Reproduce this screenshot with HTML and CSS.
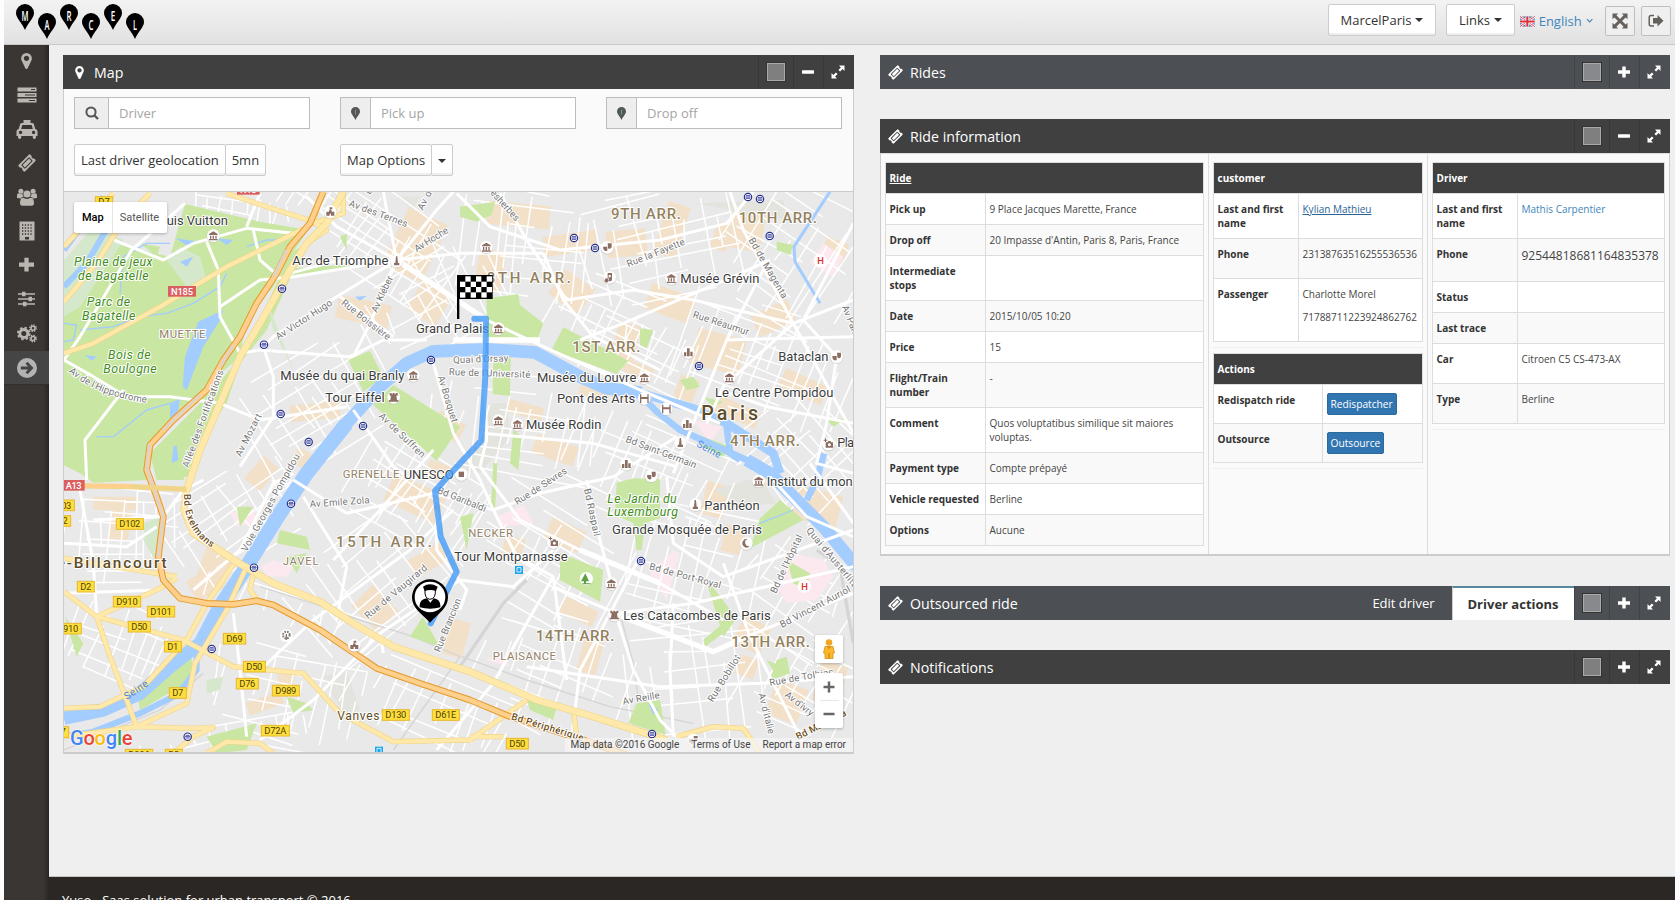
FILE: index.html
```html
<!DOCTYPE html>
<html lang="en">
<head>
<meta charset="utf-8">
<title>Marcel</title>
<link rel="stylesheet" href="styles.css">
</head>
<body>
<svg class="defs" width="0" height="0">
  <symbol id="i-marker" viewBox="0 128 1024 1536"><path d="M768 640q0-106-75-181t-181-75-181 75-75 181 75 181 181 75 181-75 75-181zm256 0q0 109-33 179l-364 774q-16 33-47.500 52t-67.500 19-67.500-19-46.500-52l-365-774q-33-70-33-179 0-212 150-362t362-150 362 150 150 362z"/></symbol>
  <symbol id="i-ticket" viewBox="0 0 18 18"><path fill-rule="evenodd" d="M10.800.8a1.200 1.200 0 0 1 1.700 0l1.200 1.200a2 2 0 0 0 2.500 2.500l1 1a1.200 1.200 0 0 1 0 1.700L7.200 17.200a1.200 1.200 0 0 1-1.700 0l-1.200-1.200a2 2 0 0 0-2.500-2.500l-1-1a1.200 1.200 0 0 1 0-1.700zM10.600 3.600 3.600 10.600a.8.8 0 0 0 0 1l2.800 2.800a.8.8 0 0 0 1 0L14.400 7.400a.8.8 0 0 0 0-1L11.600 3.600a.8.8 0 0 0-1 0zM11.100 4.600 13.400 6.900 6.900 13.400 4.600 11.100z"/></symbol>
  <symbol id="i-full" viewBox="0 0 14 14"><path d="M8 .5h5.500V6l-1.900-1.900-2.500 2.500-1.700-1.700 2.500-2.500zM6 13.500H.500V8l1.900 1.900 2.500-2.500 1.700 1.700-2.500 2.500z"/></symbol>
  <symbol id="i-plus" viewBox="0 0 12 12"><path d="M4.300.5h3.400v3.800H12v3.400H7.700v3.800H4.300V7.700H0V4.300h4.300z"/></symbol>
  <symbol id="i-minus" viewBox="0 0 12 12"><rect y="4.300" width="12" height="3.400" rx=".6"/></symbol>
  <symbol id="i-drop" viewBox="0 0 18 26"><path d="M9 0a9 9 0 0 1 9 9c0 5-6 10-9 17C6 19 0 14 0 9a9 9 0 0 1 9-9z"/></symbol>
</svg>
<div class="page">
  <header class="topbar">
    <svg class="logo" width="130" height="37" viewBox="0 0 130 37">
      <g><use href="#i-drop" x="1" y="0" width="18" height="26"/><use href="#i-drop" x="23" y="9" width="18" height="26"/><use href="#i-drop" x="45" y="0" width="18" height="26"/><use href="#i-drop" x="67" y="9" width="18" height="26"/><use href="#i-drop" x="89" y="0" width="18" height="26"/><use href="#i-drop" x="111" y="9" width="18" height="26"/></g>
      <g class="logo-letters"><text x="6.500" y="16.500" textLength="7" lengthAdjust="spacingAndGlyphs">M</text><text x="29.500" y="25.500" textLength="5" lengthAdjust="spacingAndGlyphs">A</text><text x="51.500" y="16.500" textLength="5" lengthAdjust="spacingAndGlyphs">R</text><text x="73.500" y="25.500" textLength="5" lengthAdjust="spacingAndGlyphs">C</text><text x="95.800" y="16.500" textLength="4.500" lengthAdjust="spacingAndGlyphs">E</text><text x="118" y="25.500" textLength="4" lengthAdjust="spacingAndGlyphs">L</text></g>
    </svg>
    <nav class="tools">
      <button class="drop wide">MarcelParis<i class="caret"></i></button>
      <button class="drop links">Links<i class="caret"></i></button>
      <a class="lang"><svg width="16" height="11" viewBox="0 0 16 11"><rect width="16" height="11" fill="#5f6fa8"/><path d="M0 0 16 11M16 0 0 11" stroke="#fff" stroke-width="2.600"/><path d="M0 0 16 11M16 0 0 11" stroke="#d4343f" stroke-width="1"/><path d="M8 0v11M0 5.500h16" stroke="#fff" stroke-width="4"/><path d="M8 0v11M0 5.500h16" stroke="#dc2f3b" stroke-width="2.200"/></svg><span>English</span><svg width="8" height="6" viewBox="0 0 8 6"><path d="M1 1l3 3 3-3" fill="none" stroke="#3f86bd" stroke-width="1.200"/></svg></a>
      <button class="square"><svg width="16" height="16" viewBox="0 0 16 16"><path d="M.5.500h5.700L4.400 2.300 8 6l3.600-3.700L9.800.500h5.700v5.700l-1.800-1.800L10 8l3.700 3.600 1.800-1.800v5.700H9.800l1.800-1.800L8 10l-3.600 3.700 1.800 1.800H.500V9.800l1.800 1.800L6 8 2.300 4.400.500 6.200z"/></svg></button>
      <button class="square"><svg width="16" height="14" viewBox="0 0 16 14"><path d="M6 1.500H3.200Q1.200 1.500 1.200 3.500v6.500q0 2 2 2H6" fill="none" stroke="#66605c" stroke-width="1.500"/><path d="M9.500 1 15.500 6.800 9.500 12.600V9.600H5V4h4.500z"/></svg></button>
    </nav>
  </header>
  <div class="middle">
    <aside class="side">
      <a><svg width="11" height="16"><use href="#i-marker"/></svg></a>
      <a><svg width="20" height="16" viewBox="0 0 20 16"><path fill-rule="evenodd" d="M.5.500h19v4H.500zM14 2v1h4V2zM.5 6h19v4H.500zM8 7.500v1h10v-1zM.5 11.500h19v4H.500zM12 13v1h6v-1z"/></svg></a>
      <a><svg width="22" height="19" viewBox="0 0 22 19"><path fill-rule="evenodd" d="M7.500 0h7v3h1.800q1.200 0 1.600 1.200L19.300 9q2.200.2 2.200 2.500V16H20v1.300a1.600 1.600 0 0 1-3.300 0V16H5.300v1.300a1.600 1.600 0 0 1-3.300 0V16H.500v-4.500Q.500 9.200 2.700 9L4.100 4.200Q4.500 3 5.700 3h1.800zM6.300 5 5.200 9h11.600l-1.100-4zM4.500 10.700a1.700 1.700 0 1 0 .1 0zM17.500 10.700a1.700 1.700 0 1 0 .1 0z"/></svg></a>
      <a><svg width="18" height="18"><use href="#i-ticket"/></svg></a>
      <a><svg width="20" height="18" viewBox="0 0 20 18"><circle cx="3.900" cy="3.200" r="2.500"/><circle cx="16.100" cy="3.200" r="2.500"/><path d="M0 10V7.500q0-2.200 1.800-2.200l2 .8 1.600-.3q.2 1.800 1.300 2.900Q4 9 4 10.500zM20 10V7.500q0-2.200-1.800-2.200l-2 .8-1.600-.3q-.2 1.800-1.300 2.900Q16 9 16 10.500z"/><circle cx="10" cy="6" r="3.600"/><path d="M3 15.500Q3 9.800 6 9.800q4 2.200 8 0 3 0 3 5.700 0 2.300-2.500 2.300h-9Q3 17.800 3 15.500z"/></svg></a>
      <a><svg width="16" height="20" viewBox="0 0 16 20"><path d="M.5.500h15v19H.500z"/><path d="M3 4h10M3 7h10M3 10h10M3 13h10" stroke="#3a3633" stroke-width="1.300" stroke-dasharray="1.300 1.500"/><path d="M6 16h4v2.500H6z" fill="#3a3633"/></svg></a>
      <a class="up"><svg width="15" height="15"><use href="#i-plus"/></svg></a>
      <a><svg width="17" height="16" viewBox="0 0 17 16"><path d="M0 2.300h17v1.400H0zM0 7.300h17v1.400H0zM0 12.300h17v1.400H0zM4 .800h3.500v4.400H4zM10.500 5.800H14v4.400h-3.500zM5 10.800h3.500v4.400H5z"/></svg></a>
      <a><svg width="20" height="19" viewBox="0 0 20 19"><g fill="none" stroke="#bcb6b1"><circle cx="6.800" cy="9.500" r="4" stroke-width="2.800"/><circle cx="6.800" cy="9.500" r="5.900" stroke-width="1.800" stroke-dasharray="2.400 2.230"/><circle cx="16" cy="4.200" r="2" stroke-width="1.500"/><circle cx="16" cy="4.200" r="3.200" stroke-width="1.400" stroke-dasharray="1.400 1.110"/><circle cx="16" cy="14.600" r="2" stroke-width="1.500"/><circle cx="16" cy="14.600" r="3.200" stroke-width="1.400" stroke-dasharray="1.400 1.110"/></g></svg></a>
      <a class="on"><svg width="20" height="20" viewBox="0 0 20 20"><circle cx="10" cy="10" r="10"/><path d="M3.800 10h10M9.500 4.800l5 5.200-5 5.200" fill="none" stroke="#454545" stroke-width="2.900"/></svg></a>
    </aside>
    <div class="main">
      <div class="cols">
        <section class="panel">
          <div class="bar"><svg class="mk" width="9" height="13"><use href="#i-marker"/></svg><h2>Map</h2><i class="sq"></i><b><svg width="12" height="12"><use href="#i-minus"/></svg></b><b><svg width="14" height="14"><use href="#i-full"/></svg></b></div>
          <div class="body">
            <div class="filters">
              <label class="field first"><i><svg width="14" height="14" viewBox="0 0 14 14"><path d="M9.500 9.500 13 13" stroke="#555" stroke-width="2.400"/><circle cx="6" cy="6" r="4.600" fill="none" stroke="#555" stroke-width="2"/></svg></i><span>Driver</span></label>
              <label class="field"><i><svg width="9" height="13"><use href="#i-drop"/><path d="M4.500 2.500v5" stroke="#998877"/></svg></i><span>Pick up</span></label>
              <label class="field"><i><svg width="9" height="13"><use href="#i-drop"/><path d="M4.500 2.500v5" stroke="#6aa79a"/></svg></i><span>Drop off</span></label>
              <div class="btns"><button>Last driver geolocation</button><button>5mn</button></div>
              <div class="btns"><button>Map Options</button><button class="c"><i class="caret"></i></button></div>
            </div>
            <div class="map">
              <svg id="map" width="789" height="560" viewBox="12 6 2367 1680"></svg>
              <div class="maptype"><b>Map</b><span>Satellite</span></div>
              <div class="peg"><svg width="14" height="20" viewBox="0 0 14 20"><circle cx="7" cy="3.500" r="3.300" fill="#f0a824"/><path d="M3 7.500h8l1.500 6.500H11v5.500H3V14H1.500z" fill="#fbb829" stroke="#d48f17" stroke-width=".8"/><path d="M7 14v5M5.500 7.500 7 9.500l1.500-2" stroke="#c67b12" fill="none"/></svg></div>
              <div class="zoom"><svg width="12" height="12" viewBox="0 0 12 12"><path d="M6 .5v11M.5 6h11" stroke="#666" stroke-width="2.500"/></svg><svg width="12" height="12" viewBox="0 0 12 12"><path d="M.5 6h11" stroke="#666" stroke-width="2.500"/></svg></div>
              <div class="google"><span class="gb">G</span><span class="gr">o</span><span class="gy">o</span><span class="gb">g</span><span class="gg">l</span><span class="gr">e</span></div>
              <div class="credits"><span>Map data ©2016 Google</span><span>Terms of Use</span><span>Report a map error</span></div>
            </div>
          </div>
        </section>
        <div class="right">
          <section class="panel"><div class="bar blue"><svg width="15" height="15"><use href="#i-ticket"/></svg><h2>Rides</h2><i class="sq"></i><b><svg width="12" height="12"><use href="#i-plus"/></svg></b><b><svg width="14" height="14"><use href="#i-full"/></svg></b></div></section>
          <section class="panel"><div class="bar"><svg width="15" height="15"><use href="#i-ticket"/></svg><h2>Ride information</h2><i class="sq"></i><b><svg width="12" height="12"><use href="#i-minus"/></svg></b><b><svg width="14" height="14"><use href="#i-full"/></svg></b></div>
            <div class="body info">
              <div class="col ride">
                <table class="t-ride"><tr><th colspan="2"><u>Ride</u></th></tr>
                <tr><td>Pick up</td><td>9 Place Jacques Marette, France</td></tr>
                <tr><td>Drop off</td><td>20 Impasse d'Antin, Paris 8, Paris, France</td></tr>
                <tr><td>Intermediate<br>stops</td><td></td></tr>
                <tr><td>Date</td><td>2015/10/05 10:20</td></tr>
                <tr><td>Price</td><td>15</td></tr>
                <tr><td>Flight/Train<br>number</td><td>-</td></tr>
                <tr><td>Comment</td><td>Quos voluptatibus similique sit maiores<br>voluptas.</td></tr>
                <tr><td>Payment type</td><td>Compte prépayé</td></tr>
                <tr><td>Vehicle requested</td><td>Berline</td></tr>
                <tr><td>Options</td><td>Aucune</td></tr></table>
              </div>
              <div class="col cust">
                <table class="t-cust"><tr><th colspan="2">customer</th></tr>
                <tr><td>Last and first<br>name</td><td><a class="u">Kylian Mathieu</a></td></tr>
                <tr class="h40"><td>Phone</td><td>23138763516255536536</td></tr>
                <tr class="h63"><td>Passenger</td><td>Charlotte Morel<p>71788711223924862762</p></td></tr></table>
                <hr>
                <table class="t-act"><tr><th colspan="2">Actions</th></tr>
                <tr class="h39"><td>Redispatch ride</td><td><button>Redispatcher</button></td></tr>
                <tr class="h39"><td>Outsource</td><td><button>Outsource</button></td></tr></table>
                <hr>
              </div>
              <div class="col drv">
                <table class="t-drv"><tr><th colspan="2">Driver</th></tr>
                <tr><td>Last and first<br>name</td><td><a>Mathis Carpentier</a></td></tr>
                <tr class="h43"><td>Phone</td><td class="big">92544818681164835378</td></tr>
                <tr><td>Status</td><td></td></tr>
                <tr><td>Last trace</td><td></td></tr>
                <tr class="h40"><td>Car</td><td>Citroen C5 CS-473-AX</td></tr>
                <tr class="h40"><td>Type</td><td>Berline</td></tr></table>
                <hr>
              </div>
            </div>
          </section>
          <section class="panel"><div class="bar blue"><svg width="15" height="15"><use href="#i-ticket"/></svg><h2>Outsourced ride</h2><span class="tab">Edit driver</span><span class="tab act">Driver actions</span><i class="sq"></i><b><svg width="12" height="12"><use href="#i-plus"/></svg></b><b><svg width="14" height="14"><use href="#i-full"/></svg></b></div></section>
          <section class="panel"><div class="bar"><svg width="15" height="15"><use href="#i-ticket"/></svg><h2>Notifications</h2><i class="sq"></i><b><svg width="12" height="12"><use href="#i-plus"/></svg></b><b><svg width="14" height="14"><use href="#i-full"/></svg></b></div></section>
        </div>
      </div>
      <footer>Yuso - Saas solution for urban transport © 2016</footer>
    </div>
  </div>
</div>
<script src="map.js"></script>
</body>
</html>
```
FILE: map.js
```js
// City map: three units of the viewBox make one pixel.
const out = [];
const add = s => out.push(s);
let seed = 11;
const rnd = () => (seed = (seed * 16807) % 2147483647) / 2147483647;
const line = (cls, w, list) => list.forEach(p => add(`<polyline class="${cls}" stroke-width="${w}" points="${p}"/>`));
const area = (fill, list) => list.forEach(p => add(`<polygon fill="${fill}" points="${p}"/>`));

add('<rect x="12" y="6" width="2367" height="1680" fill="#e9e9e9"/>');

// Commercial blocks: x, y, width, height, angle
[[1000,70,130,190,25],[830,330,160,70,12],[1060,280,100,110,30],[1280,40,190,70,5],[1450,130,160,60,-8],[1250,180,80,120,10],[1480,260,110,90,35],
[1640,120,120,80,-5],[1800,40,70,160,18],[1760,300,140,80,20],[1900,430,150,110,15],[1660,400,70,130,15],[2010,60,100,120,10],[2080,350,120,70,-25],
[2160,560,140,60,25],[1960,640,140,50,25],[1560,580,90,50,22],[1340,640,110,40,15],[1420,750,130,60,18],[1120,680,90,60,30],[690,640,150,50,-5],[560,820,90,60,-50],
[700,780,50,50,30],[980,880,170,90,25],[1100,820,80,50,20],[420,1080,90,110,20],[390,1150,80,70,-30],[900,1200,90,110,-45],[1050,1080,110,60,-30],
[1160,1290,60,110,15],[1460,1000,110,70,25],[1500,1240,110,50,25],[1930,880,70,100,15],[1990,1010,60,80,15],[2200,900,140,100,15],[2030,1290,90,90,25],
[2130,1480,100,110,20],[2030,1400,60,60,20],[560,1520,110,40,-20],[650,1440,50,80,10],[100,920,130,40,0],[150,960,60,90,10],[1560,1350,60,100,15],[2290,150,70,60,20],
[1690,520,90,40,22],[1850,560,60,70,20],[2270,1420,80,120,15],[1330,1040,60,60,15],[1960,100,50,80,18]]
.forEach(([x,y,w,h,a]) => add(`<rect x="${x}" y="${y}" width="${w}" height="${h}" fill="#f2e0c8" transform="rotate(${a} ${x + w / 2} ${y + h / 2})"/>`));
area('#e2e4dd', ['1010,20 1080,20 1060,60','1180,830 1260,740 1270,640 1340,640 1350,740 1260,850','790,1460 860,1440 900,1560 850,1580','1900,40 2170,30 2180,90','1960,900 2100,860 2150,940 2050,950']);
area('#fbe9ef', ['2250,220 2290,160 2350,200 2320,260','1900,690 1985,710 1950,760','1310,980 1390,945 1420,1000 1330,1010','1770,1150 1840,1080 1860,1090 1820,1230','510,970 580,950 590,1000 530,1010','605,1130 640,1110 700,1130 680,1160 620,1160','1280,1410 1330,1390 1350,1430']);

// Minor streets: x, y, width, height, angle, spacing
[[640,0,620,300,33,42],[900,180,440,330,-28,46],[1200,0,420,330,8,48],[1560,0,480,330,-12,44],[1980,0,420,420,32,52],[1460,300,460,280,24,36],[1850,360,540,330,20,40],
[560,480,440,360,-32,50],[1100,560,540,330,10,46],[1500,700,560,340,24,44],[2040,650,350,330,48,46],[860,790,430,280,32,40],[320,840,430,300,-34,48],
[12,890,340,320,4,44],[700,1010,500,340,-38,52],[1220,960,520,330,30,54],[1700,960,400,380,14,52],[2050,1050,340,330,32,58],[20,1240,330,260,22,48],
[450,1380,460,300,12,50],[860,1460,520,220,24,56],[1250,1280,480,380,20,56],[1700,1300,420,370,-6,62],[2050,1350,340,330,28,46],[240,1600,500,90,-12,50],[400,10,300,110,8,34],[420,1220,560,120,18,90]]
.forEach(([x,y,w,h,a,g]) => {
  let d = '';
  for (let i = 0; i < w; i += g * (0.5 + rnd())) { const s = rnd() * h * 0.4, e = h * (0.5 + rnd() * 0.5); d += `M${(x + i).toFixed()} ${(y + s).toFixed()}L${(x + i + rnd() * 30 - 15).toFixed()} ${(y + e).toFixed()}`; }
  for (let j = 0; j < h; j += g * (0.5 + rnd())) { const s = rnd() * w * 0.4, e = w * (0.5 + rnd() * 0.5); d += `M${(x + s).toFixed()} ${(y + j).toFixed()}L${(x + e).toFixed()} ${(y + j + rnd() * 30 - 15).toFixed()}`; }
  add(`<path d="${d}" fill="none" stroke="#fff" stroke-width="4.500" transform="rotate(${a} ${x + w / 2} ${y + h / 2})"/>`);
});
area('#fbe9ef', ['2150,1190 2200,1090 2290,1110 2320,1160 2270,1230 2180,1240']);

// Railways
line('rail', 10, ['2380,1360 2340,1130 2270,1080','1200,1430 1330,1240 1400,1170']);
line('rail', 4, ['12,1680 300,1560 430,1450','1200,1400 1060,1340 900,1290 760,1240 600,1190','1205,1400 1400,1470 1650,1550 1900,1600','1000,1680 1200,1400','1680,1270 1720,1420 1740,1560']);

// Parks
area('#c9e6a2', ['12,210 180,165 330,200 375,42 600,95 745,120 690,200 640,290 560,380 540,500 470,560 440,620 340,690 270,770 262,870 100,878 60,850 12,826',
 '690,190 740,160 720,200 620,420 540,520 500,640 400,780 370,870 290,870 270,790 440,620 560,480','1280,325 1375,312 1380,345 1450,400 1430,455 1280,440',
 '1510,412 1705,512 1670,552 1475,480','1000,585 1200,710 1130,812 940,645','1300,500 1352,500 1350,618 1298,612','865,510 930,482 970,560 910,605','1200,50 1305,35 1295,75 1250,95 1200,80',
 '1670,878 1720,865 1800,868 1800,985 1755,1000 1745,1080 1730,1080 1720,1000 1665,975','2160,930 2230,990 2070,1075 2100,985','1730,1540 1800,1530 1817,1635 1705,1600','1088,1280 1140,1370 1050,1340',
 '390,1380 400,1440 360,1490 240,1560 235,1530 310,1450','660,1020 740,1040 750,1080 650,1060','680,1100 740,1090 710,1150','1935,1160 2030,1285 1990,1340','2120,1410 2190,1440 2150,1460','1740,415 1780,420 1760,475 1740,465',
 '1360,720 1385,740 1375,840 1350,820','2150,155 2200,165 2190,195 2150,180','700,235 1010,215 700,262','2300,690 2360,685 2320,710','1500,1090 1630,1140 1620,1235 1500,1170','1930,740 2010,770 1990,800 1930,770','440,1640 590,1600 560,1680 470,1690',
 '1300,820 1312,820 1305,960 1292,960','1930,1350 2000,1290 1990,1330 1935,1370','2180,1110 2250,1150 2240,1200 2200,1180','840,140 860,130 860,180','290,200 240,160 300,170','1930,620 1990,635 1960,650','530,950 580,950 540,1010','330,860 380,780 420,700 400,860',
 '680,1520 740,1540 760,1560 700,1570','1400,1530 1490,1550 1480,1590 1410,1560','1240,970 1200,980 1220,1080','15,1280 70,1360 50,1400','2150,1410 2180,1400 2190,1450 2130,1470','1860,570 1900,560 1920,590 1880,600']);
area('#d6e8cb', ['12,210 100,110 190,150 160,200 60,350 12,380','320,210 360,170 420,200 440,270 380,290','250,1000 300,980 290,1120 250,1050','440,1470 490,1460 480,1500 440,1510','700,540 620,330 640,420']);

// Water
line('water', 38, ['2390,1130 2290,1010 2130,850 2060,810','1745,608 1640,595 1560,560 1425,487 1280,478 1120,484 1040,520 960,590 860,700 740,850']);
line('water', 44, ['860,700 740,850 650,985 560,1130 470,1265']);
line('water', 40, ['475,1255 420,1360 330,1430 240,1510 130,1560 12,1585']);
line('water', 26, ['1735,608 1900,655 2000,700 2140,790 2160,850']);
line('water', 20, ['1740,612 1790,665 1860,720 1960,765 2060,810 2130,850','2000,710 2010,790 2040,810','2292,790 2270,870 2240,930']);
line('water', 18, ['410,1370 410,1440 350,1515 240,1570 100,1625 12,1640','12,180 130,20','12,290 80,220 150,100']);
line('water', 9, ['2310,5 2202,170 2205,215 2280,340']);
area('#a3ccff', ['345,145 420,155 380,165','360,215 400,200 380,230','400,1035 450,1020','415,395 490,360 480,390 430,470 380,600 368,590 375,500','75,495 110,500 95,512','330,640 360,625 350,690 330,700','340,770 350,765 355,810 335,820','885,320 920,318 900,332','1765,1540 1795,1560 1780,1575','470,145 520,150 500,165']);
line('brook', 4, ['12,400 50,405 40,450 12,455','60,420 160,410 240,380 320,370 400,340 480,290 500,250','110,740 160,740 260,660 330,640','180,310 190,200 260,160 330,160','560,170 620,150 660,150','2100,1000 2200,960']);

// Main white roads
line('white', 9, ['12,510 60,440 215,180 375,40','150,145 310,210 400,160 560,115 700,130','440,155 475,240 480,380 540,490 600,480 870,500 970,450 1100,450','580,120 600,210 640,245','600,10 560,110','12,510 100,560 200,620 330,620 480,640 600,690 860,650',
 '190,600 75,750 80,870','480,350 600,270 700,260 1010,210','1010,210 830,110 740,20','1010,210 1130,60 1180,5','1010,210 1280,390 1450,470 1740,600 1980,700','1010,210 980,60 970,5','1010,210 1200,190 1450,190','1010,210 930,400 880,500','1010,210 830,320 640,440 610,470','840,320 1000,440','1010,210 820,215 690,250',
 '1190,10 1290,110 1500,180 1800,150 2000,100 2080,5','1450,190 1510,330 1600,440 1800,540','1320,10 1400,150 1520,330 1720,300 1900,330 2200,400 2380,330','2200,400 2050,120 2010,5','2200,400 2330,640 2380,730','2200,400 1990,590 1940,700','2120,220 2000,450 1900,700 1840,850','2000,450 2380,440','1560,450 1690,400 2020,260 2130,210','2380,100 2230,390 2330,500 2300,700','1980,600 2120,650 2380,700',
 '610,470 640,560 640,680 540,830','1120,520 1180,730 1260,870 1300,960 1370,1100 1480,1160 1520,1470','880,660 1000,830 1040,860','700,870 860,970 1120,910 1300,960','1300,960 1440,910 1660,860 1850,740','1260,830 1380,990 1560,1080 1800,1180 1990,1290','1580,870 1620,1050 1660,1200','1820,860 1840,1060 1990,1160 2380,1020',
 '1740,1100 1650,1270 1560,1440 1530,1680','1660,1270 1960,1385 2060,1340 2380,1210','1990,1120 2070,1340 2230,1660','1670,1280 1720,1440 1800,1590 1850,1640','1480,1190 1670,1270 1900,1240 2380,1130','1200,1170 1360,1190 1480,1080','1480,1160 1400,1300 1300,1480 1130,1680','970,1390 960,1330 1200,1170','520,1270 540,1440 560,1640','600,1440 760,1290 1050,1080 1180,960',
 '12,1060 200,1070 290,1010','12,1210 300,1200','60,900 100,1120 110,1280','100,990 300,980','2250,820 2380,1000','2300,700 2270,820 2380,850','1270,730 1600,760 1850,830','1270,380 1280,750 1260,830','2130,860 2240,980 2380,1040','1400,1430 1800,1490 2100,1480 2380,1460','600,1650 760,1530 960,1330','1130,960 1130,1080 1220,1200 1200,1260','820,1110 960,960 1120,780','730,920 860,1130 830,1290','400,1200 540,1080 640,880 700,850','430,870 370,900 310,980','1840,1240 1830,1440 1840,1640']);
line('white', 16, ['1010,210 1280,390','1660,1270 1960,1385 2060,1340','1560,1080 1800,1180','1180,450 1440,450']);

// Yellow roads
const yellow = ['850,5 800,100 740,160 690,240 640,330 600,400 540,500 480,640 420,780 380,900 372,960 400,1030 530,1115 640,1180 780,1235 880,1300 1000,1370 1230,1445 1430,1530 1600,1580 1820,1650',
 '12,490 100,460 300,350 500,230 740,112','500,10 620,50 745,90 800,120 740,160','12,170 160,10','12,335 110,220 190,90 270,10','12,1205 110,1280 150,1400 200,1530 230,1610 400,1615 460,1612 400,1640 340,1690','110,1280 300,1195 350,1165','12,1105 350,1160',
 '110,1280 370,1350 520,1430 730,1450 840,1570 1000,1655 1230,1650 1400,1530','12,1555 120,1550 250,1490 380,1350 440,1240 530,1110','12,1640 230,1610 380,1540 405,1420 500,1260 560,1130','440,1690 500,1655 600,1660 640,1690','580,1150 570,1200 600,1240','1540,1560 1550,1640','1230,1640 1330,1640','1850,1640 1960,1610 2050,1615 2100,1690','780,20 760,100 850,70 850,5'];
line('ycase', 16, yellow); line('yellow', 12, yellow);
line('ycase', 22, [yellow[0]]); line('yellow', 18, [yellow[0]]);
const ring = ['790,5 750,100 690,170 650,250 590,340 540,440 490,510 440,600 340,690 270,765 260,840 290,920 310,980 295,1100 310,1170 360,1225 440,1240 520,1243 590,1232 640,1245 780,1320 950,1435 1080,1480 1230,1530 1350,1580 1570,1650 1700,1695'];
line('rcase', 20, ring); line('ring', 14, ring);
line('tunnel', 9, ['680,180 640,260','520,465 480,530','420,615 310,720','268,760 260,830 290,920 310,980 295,1100']);
line('ycase', 16, ['12,887 210,890 380,898']); line('ring', 12, ['12,887 210,888']);

// Text
const T = (cls, list) => list.forEach(([s,x,y,w,r]) => add(`<text class="${cls}" x="${x}" y="${y}" ${w ? `textLength="${w}"` : ''} ${r ? `transform="rotate(${r} ${x} ${y})"` : ''}>${s}</text>`));
T('st', [['Av des Ternes',865,48,185,20],['Av Hoche',1070,187,115,-32],['Av Kléber',950,370,118,-65],['Av Victor Hugo',655,450,195,-33],['Rue Boissière',842,342,178,38],
 ['Allée des Fortifications',385,835,310,-70],['Av Mozart',542,802,140,-63],['Av de Suffren',955,680,180,44],['Av Bosquet',1133,560,145,73],["Quai d'Orsay",1180,520,165,-2],["Rue de l'Université",1166,555,245,2],
 ['esherbes',1290,10,115,48],['Rue la Fayette',1705,232,185,-22],['Bd de Magenta',2065,150,205,60],['Rue Réaumur',1897,382,175,18],['Av Parmentier',2345,350,0,68],['Bd Saint-Germain',1695,755,225,21],
 ['Voie Georges Pompidou',560,1087,330,-61],['Av Emile Zola',750,952,180,-4],['Bd Garibaldi',1130,908,155,22],['Rue de Sèvres',1372,946,180,-33],['Bd Raspail',1572,898,145,78],['Rue de Vaugirard',924,1288,235,-40],['Rue Brancion',1140,1388,170,-68],
 ['Bd de Port-Royal',1766,1138,222,15],["Bd de l'Hôpital",2148,1212,190,-65],["Quai d'Austerlitz",2237,1022,225,50],['Bd Vincent Auriol',2166,1314,235,-28],['Av Reille',1690,1544,112,-10],['Rue Bobillot',1958,1538,160,-58],['Rue de Tolbiac',2130,1488,195,-10],["Av d'Italie",2095,1512,125,76],["Av d'Ivry",2173,1518,100,38],['Av d',1088,62,60,-62],['B',930,15,0,-60]]);
add(`<path id="hip" d="M26 545Q110 620 270 640" fill="none"/><text class="st"><textPath href="#hip" textLength="255">Av de l'Hippodrome</textPath></text>`);
add(`<path id="exe" d="M372 912Q370 1020 455 1072" fill="none"/><text class="hw"><textPath href="#exe" textLength="190">Bd Exelmans</textPath></text>`);
T('hw', [['Bd Périphérique',1352,1588,225,17],['Bd Masséna',2214,1650,165,-27]]);
T('wt', [['Seine',1908,768,78,28],['Seine',200,1530,80,-33]]);
T('area', [['MUETTE',298,445,138],['GRENELLE',848,864,170],['JAVEL',668,1126,108],['NECKER',1225,1041,134],['PLAISANCE',1298,1410,190]]);
T('arr', [['9TH ARR.',1653,87,210],['10TH ARR.',2036,99,235],['8TH ARR.',1280,280,253],['1ST ARR.',1537,486,204],['4TH ARR.',2010,769,210],['15TH ARR.',828,1071,288],['14TH ARR.',1427,1353,236],['13TH ARR.',2014,1372,236]]);
T('pk', [['Plaine de jeux',42,229,235],['de Bagatelle',54,269,212],['Parc de',80,349,130],['Bagatelle',66,389,160],['Bois de',144,508,128],['Boulogne',130,548,160],['Le Jardin du',1642,938,208],['Luxembourg',1642,978,212]]);
T('city', [['Paris',1924,690,170]]);
T('town', [['e-Billancourt',-10,1135,330]]);
T('poi', [['uis Vuitton',320,104,184],['Arc de Triomphe',697,226,288],['Grand Palais',1068,430,219],['Musée du quai Branly',661,569,372],['Tour Eiffel',796,635,178],['UNESCO',1031,868,150],['Musée Grévin',1861,278,237],['Bataclan',2155,512,150],['Musée du Louvre',1431,575,298],['Pont des Arts',1491,638,235],
 ['Musée Rodin',1398,716,226],['Le Centre Pompidou',1965,620,355],['Institut du monde',2120,888,300],['Panthéon',1933,960,166],['Grande Mosquée de Paris',1656,1032,450],['Tour Montparnasse',1183,1113,340],['Les Catacombes de Paris',1690,1289,442],['Pla',2332,772,50]]);
T('vanves', [['Vanves',832,1589,126]]);

// Museums, monuments and stations
const museum = 'M-13-5 0-13 13-5v3h-26zM-10 0h4v9h-4zM-2 0h4v9h-4zM6 0h4v9H6zM-13 10h26v4h-26z';
const tower = 'M-2-14h4l2 20h4v7H-8V6h4z';
const city = 'M-13 0h7v12h-7zM-4-12h8v24h-8zM6-2h7v14H6z';
const mask = 'M-13-2h13v12q-8 4-12-4zM1-12h12v12q-6 8-11 2z';
const note = 'M-6-13h13v18a6 6 0 1 1-4-5V-7H-3v16a6 6 0 1 1-3-5z';
const rook = 'M-12-13h6v4h3v-4h6v4h3v-4h6v8h-4l2 13h4v5h-28V8h4l2-13h-4z';
const bridge = 'M-13-12h4v8H9v-8h4v26H9V2H-9v12h-4z';
const hall = 'M-2-13h8v6h-5v3h3v4h8v12H2V6h-4v6h-10V0h8v-4h2z';
const camera = 'M-8-5h5l3-4h6l3 4h5v16H-8zM3-2a4.500 4.500 0 1 0 .1 0zM-14-13h4v-4h3v4h4v3h-4v4h-3v-4h-4z';
[[460,137,museum],[811,65,hall],[1010,213,tower],[1060,556,museum],[1001,622,rook],[1204,853,'M-8-8H8V8H-8z'],[1279,171,museum],[1642,172,mask],[1649,262,note],[1834,265,museum],[1315,416,museum],[1885,487,city],[2330,500,mask],
[2008,563,museum],[1753,563,museum],[1753,625,bridge],[1819,656,bridge],[1882,702,city],[1315,692,museum],[1372,703,museum],[1861,758,tower],[1699,822,city],[1774,857,mask],[2305,762,camera],[2096,873,museum],
[1906,944,tower],[2059,1060,'M4-13A13 13 0 1 0 11 8 10 10 0 1 1 4-13z'],[1480,1057,camera],[1654,1181,museum],[1663,1275,rook],[883,1365,hall],[1900,1650,mask]]
.forEach(([x,y,d]) => add(`<g transform="translate(${x} ${y})"><circle r="20" cy="2" fill="#bbb" opacity=".5"/><circle r="19" fill="#fff"/><path d="${d}" fill="#8d6e63" fill-rule="evenodd"/></g>`));
add('<circle cx="679" cy="1337" r="19" fill="#fff"/><circle cx="679" cy="1335" r="10" fill="none" stroke="#857c72" stroke-width="6" stroke-dasharray="5 3"/><path d="M679 1332v18" stroke="#857c72" stroke-width="4"/>');
add('<circle cx="1579" cy="1166" r="20" fill="#fff"/><path d="M1576 1150l11 24h-9v6h14v3h-25v-3h5v-6h-9z" fill="#5ba141"/>');
[[2281,212],[2233,1188]].forEach(([x,y]) => add(`<circle cx="${x}" cy="${y}" r="20" fill="#fff"/><text class="hosp" x="${x - 9}" y="${y + 11}">H</text>`));
[[666,296],[612,464],[1113,510],[662,672],[909,708],[746,756],[693,941],[582,1133],[455,1377],[383,1640],[1542,144],[1605,174],[2064,21],[2100,27],[2129,138],[1917,528],[1743,1113],[1776,1632]]
.forEach(([x,y]) => add(`<g transform="translate(${x} ${y})"><circle r="11" fill="#fff" stroke="#26308f" stroke-width="3.500"/><path d="M-6-4H6M-6 4H6M-8 0H8" stroke="#26308f" stroke-width="2.500"/></g>`));
[[1377,1140],[957,1682]].forEach(([x,y]) => add(`<g transform="translate(${x} ${y})"><rect x="-12" y="-12" width="24" height="24" fill="#1aa7ee"/><path d="M-6-7H6V6H-6z" fill="none" stroke="#fff" stroke-width="2.500"/></g>`));

// Road shields
[['D7',106,20,52],['D103',-38,930,81],['D2',-20,977,52],['D102',169,986,81],['D2',52,1174,51],['D910',160,1219,82],['D101',262,1249,82],['D910',-18,1300,82],['D50',205,1294,66],['D1',313,1354,51],['D69',490,1330,67],['D50',550,1414,66],['D76',529,1465,66],['D989',637,1486,81],['D7',328,1493,51],['D72A',604,1606,84],['D130',967,1559,81],['D61E',1117,1559,81],['D50',1339,1645,66],['D7',-25,1610,51],['D906',196,1678,82],['D2',316,1678,51]]
.forEach(([s,x,y,w]) => add(`<rect x="${x}" y="${y}" width="${w}" height="32" fill="#ffdf3d" stroke="#e8b82e" stroke-width="3"/><text class="sh" x="${x + 9}" y="${y + 26}" textLength="${w - 18}">${s}</text>`));
[['N185',324,288,84],['A13',8,870,66],['N13',531,-18,68]].forEach(([s,x,y,w]) => add(`<rect x="${x}" y="${y}" width="${w}" height="32" fill="#db5f5f"/><text class="rs" x="${x + 9}" y="${y + 26}" textLength="${w - 18}">${s}</text>`));

// Trip
line('route', 18, ['1243,386 1278,386 1276,560 1264,752 1180,842 1125,903 1142,1040 1190,1145 1112,1300']);
let f = '<rect x="1194" y="255" width="104" height="72"/>';
for (let r = 0; r < 4; r++) for (let c = 0; c < 6; c++) if ((r + c) % 2) f += `<rect x="${1200 + c * 16}" y="${259 + r * 16}" width="16" height="16" fill="#fff"/>`;
add(`<g>${f}<rect x="1191" y="255" width="7" height="132"/></g>`);
add('<path d="M1110 1168a54 54 0 0 1 54 54c0 32-26 46-54 76-28-30-54-44-54-76a54 54 0 0 1 54-54z"/><circle cx="1110" cy="1221" r="46" fill="#fff"/><path d="M1079 1244q2-16 22-19l10 13 10-13q18 3 20 19v8q-30 8-62 0z"/><path d="M1095 1200q-2 26 15 28 18-2 16-28" fill="#fff" stroke="#000" stroke-width="3"/><path d="M1089 1190q20-14 44 0l-5 13q-17-6-34 0z"/>');

document.getElementById('map').innerHTML = out.join('');
```
FILE: styles.css
```css
* { box-sizing: border-box; }
body { margin: 0; background: #fdfdff; font: 13px/18px "Open Sans", sans-serif; color: #333; overflow: hidden; }
.defs { position: absolute; }
button { font: inherit; color: inherit; margin: 0; }
h2, p { margin: 0; font-weight: 400; }
.page { margin: 0 5px 0 4px; height: 900px; display: flex; flex-direction: column; overflow: hidden; }
.topbar { height: 45px; flex: none; display: flex; justify-content: space-between; border-bottom: 1px solid #c9c9c9; background: linear-gradient(#f3f3f3, #e1e1e1); }
.logo { margin: 4px 0 0 11px; }
.logo-letters text { font: 600 14px "Open Sans"; fill: #fff; }
.tools { display: flex; align-items: flex-start; padding: 4px 4px 0 0; }
.drop { height: 32px; border: 1px solid #ccc; border-radius: 2px; background: #fff; box-shadow: inset 0 -2px 0 #eee; padding: 0; display: flex; align-items: center; justify-content: center; }
.wide { width: 108px; margin-right: 10px; }
.links { width: 69px; margin-right: 5px; }
.caret { border: 4px solid transparent; border-top-color: #333; border-bottom: 0; margin-left: 4px; }
.lang { display: flex; align-items: center; gap: 4px; color: #3f86bd; margin: 8px 12px 0 0; width: 73px; white-space: nowrap; }
.square { width: 30px; height: 30px; margin: 2px 0 0 6px; border: 1px solid #bfbfbf; border-radius: 2px; background: #efefef; padding: 0; display: flex; align-items: center; justify-content: center; fill: #66605c; }
.square:nth-of-type(3) { margin-left: 0; }
.middle { flex: 1; display: flex; min-height: 0; }
.side { width: 45px; background: #3a3633; box-shadow: inset -5px 0 4px -3px #25221f; fill: #bcb6b1; flex: none; }
.side a { height: 34px; display: flex; align-items: center; justify-content: center; padding-bottom: 2px; }
.side a.up { padding-bottom: 4px; }
.side a.on { background: #454545; fill: #b3b3b3; border-bottom: 1px solid #303030; padding: 0; }
.main { flex: 1; display: flex; flex-direction: column; background: #efefef; }
.cols { height: 832px; flex: none; display: flex; padding: 10px 5px 0 14px; gap: 26px; border-bottom: 1px solid #c6c6c6; }
.cols > .panel { width: 791px; flex: none; }
.right { width: 790px; display: flex; flex-direction: column; gap: 30px; }
.bar { height: 34px; background: #404040; color: #fff; fill: #fff; display: flex; align-items: center; padding: 0 1.500px 0 8px; }
.bar.blue { background: #4c4f53; }
.bar > svg { flex: none; }
.bar > svg.mk { margin: 0 3px 0 4px; }
.bar h2 { font-size: 14.200px; margin-left: 7px; padding-top: 2px; flex: 1; }
.bar > b { width: 30px; height: 34px; border-left: 1px solid #0002; display: flex; align-items: center; justify-content: center; }
.sq { width: 35px; height: 34px; border-left: 1px solid #0002; padding: 7px; flex: none; display: flex; }
.sq::before { content: ""; flex: 1; background: #fff5; background-clip: padding-box; border: 1px solid #aaa; outline: 1px solid #333; outline-offset: 0; margin: 1px; }
.tab { align-self: stretch; padding: 8px 17px 0 0; }
.tab.act { background: #fff; border-top: 2px solid #57889c; border-left: 1px solid #ccc; color: #333; font-weight: 700; padding: 7px 15px 0 15px; width: 122px; white-space: nowrap; }
.body { background: #fafafa; border: 1px solid #ccc; border-top: 0; border-bottom-width: 2px; }
.filters { height: 103px; border-bottom: 1px solid #ccc; display: grid; grid-template-columns: 236px 236px 236px; column-gap: 30px; row-gap: 15px; padding: 8px 10px; align-content: start; grid-template-rows: 32px 32px; }
.field { height: 32px; border: 1px solid #bdbdbd; display: flex; background: #fff; color: #a5a5a5; }
.field i { width: 30px; background: #eee; border-right: 1px solid #bdbdbd; display: flex; align-items: center; justify-content: center; fill: #555; }
.field.first i { width: 34px; }
.field span { padding: 6px 0 0 10px; }
.btns { display: flex; }
.btns button { border: 1px solid #ccc; background: #fff; box-shadow: inset 0 -2px 0 #eee; padding: 0 6px; border-radius: 2px; white-space: nowrap; }
.btns button + button { margin-left: -1px; }
.btns .c { width: 22px; padding: 0; }
.btns .caret { display: block; margin: 1px auto 0; width: 8px; }
.map { position: relative; height: 560px; overflow: hidden; font-family: Roboto, sans-serif; }
.map > svg { display: block; }
.maptype { position: absolute; left: 10px; top: 10px; height: 31px; display: flex; background: #fff; border-radius: 2px; box-shadow: 0 1px 3px #0004; font-size: 11px; line-height: 31px; color: #565656; }
.maptype b { color: #000; padding: 0 8px; border-right: 1px solid #e6e6e6; font-weight: 500; }
.maptype span { padding: 0 8px 0 7px; }
.peg, .zoom { position: absolute; left: 751px; width: 28px; background: #fff; border-radius: 2px; box-shadow: 0 1px 3px #0004; display: flex; align-items: center; }
.peg { top: 443px; height: 28px; justify-content: center; }
.zoom { top: 481px; height: 55px; flex-direction: column; justify-content: space-between; padding: 8px 0; background: linear-gradient(#e6e6e6, #e6e6e6) center / 19px 1px no-repeat #fff; }
.google { position: absolute; left: 6px; top: 533px; font: 500 20px/26px Roboto, sans-serif; letter-spacing: -.2px; text-shadow: 0 0 2px #fff, 0 0 2px #fff; }
.gb { color: #4285f4; } .gr { color: #ea4335; } .gy { color: #fbbc05; } .gg { color: #34a853; }
.credits { position: absolute; right: 0; bottom: 0; height: 14px; background: #f5f5f5b8; font-size: 10px; line-height: 14px; color: #444; display: flex; gap: 12px; padding: 0 7px 0 5px; white-space: nowrap; }
#map polyline { fill: none; stroke-linejoin: round; stroke-linecap: butt; }
#map .white { stroke: #fff; }
#map .rail { stroke: #d5d5d5; }
#map .water { stroke: #a3ccff; }
#map .brook { stroke: #a3ccff; }
#map .ycase { stroke: #f0d48a; }
#map .yellow { stroke: #ffe9aa; }
#map .rcase { stroke: #e39a2d; }
#map .ring { stroke: #ffcf8c; }
#map .tunnel { stroke: #dfd3c7; }
#map .route { stroke: #3d97f7; stroke-opacity: .78; stroke-linecap: round; }
#map text { font-family: Roboto, sans-serif; paint-order: stroke; stroke: #fff; stroke-width: 6px; stroke-linejoin: round; }
#map .st { font-size: 29px; fill: #757575; }
#map .hw { font-size: 29px; fill: #6d5020; font-weight: 500; }
#map .wt { font-size: 30px; fill: #4487d9; stroke: none; }
#map .area { font-size: 34px; fill: #937f67; }
#map .arr { font-size: 45px; fill: #93815e; font-weight: 500; }
#map .pk { font-size: 37px; fill: #3f8c1a; font-style: italic; }
#map .city { font-size: 59px; fill: #5d4c29; font-weight: 500; }
#map .town { font-size: 46px; fill: #5d4c29; font-weight: 500; }
#map .poi { font-size: 39px; fill: #3c3c3c; }
#map .vanves { font-size: 36px; fill: #5d4c29; }
#map .hosp { font-size: 28px; fill: #dd2c2c; font-weight: 500; stroke: none; }
#map .sh { font-size: 28px; fill: #4f4204; stroke: none; }
#map .rs { font-size: 28px; fill: #fff; font-weight: 500; stroke: none; }
.info { display: flex; height: 403px; font-size: 10px; line-height: 14px; border-top: 1px solid #ddd; }
.col { padding-top: 8px; }
.col.ride { width: 327px; padding-left: 4px; }
.col.cust { width: 219px; padding-left: 4px; border-left: 1px solid #ddd; }
.col.drv { flex: 1; padding-left: 4px; border-left: 1px solid #ddd; }
table { border-collapse: collapse; background: #fff; }
th { background: #404040; color: #fff; text-align: left; height: 31px; }
td, th { border: 1px solid #ddd; padding: 8px 3.500px; vertical-align: top; }
tr { height: 31px; }
tr:nth-child(odd) td { background: #f9f9f9; }
td:first-child { font-weight: 700; white-space: nowrap; }
td:last-child { color: #444; white-space: nowrap; }
td:first-child { color: #333; }
.t-ride { width: 319px; } .t-cust, .t-act { width: 210px; } .t-drv { width: 233px; }
.t-ride td:first-child { width: 100px; }
.t-cust td:first-child { width: 85px; }
.t-act td:first-child { width: 109px; }
.t-drv td:first-child { width: 85px; }
.h40 { height: 40px; } .h63 { height: 63px; } .h39 { height: 39px; } .h43 { height: 43px; }
.big { font-size: 12px; line-height: 18px; }
td p { margin-top: 9px; }
td a { color: #3f86bd; }
td a.u { color: #2a6496; text-decoration: underline; }
td button { display: block; height: 22px; background: #3276b1; border: 1px solid #2c699d; border-radius: 2px; color: #fff; padding: 0 3px; line-height: 20px; font-size: 10.200px; }
hr { border: 0; border-top: 1px solid #eee; margin: 5px 4px 5px 0; }
footer { flex: 1; background: #2a2725; color: #fff; padding: 14px 0 0 13px; }
```
